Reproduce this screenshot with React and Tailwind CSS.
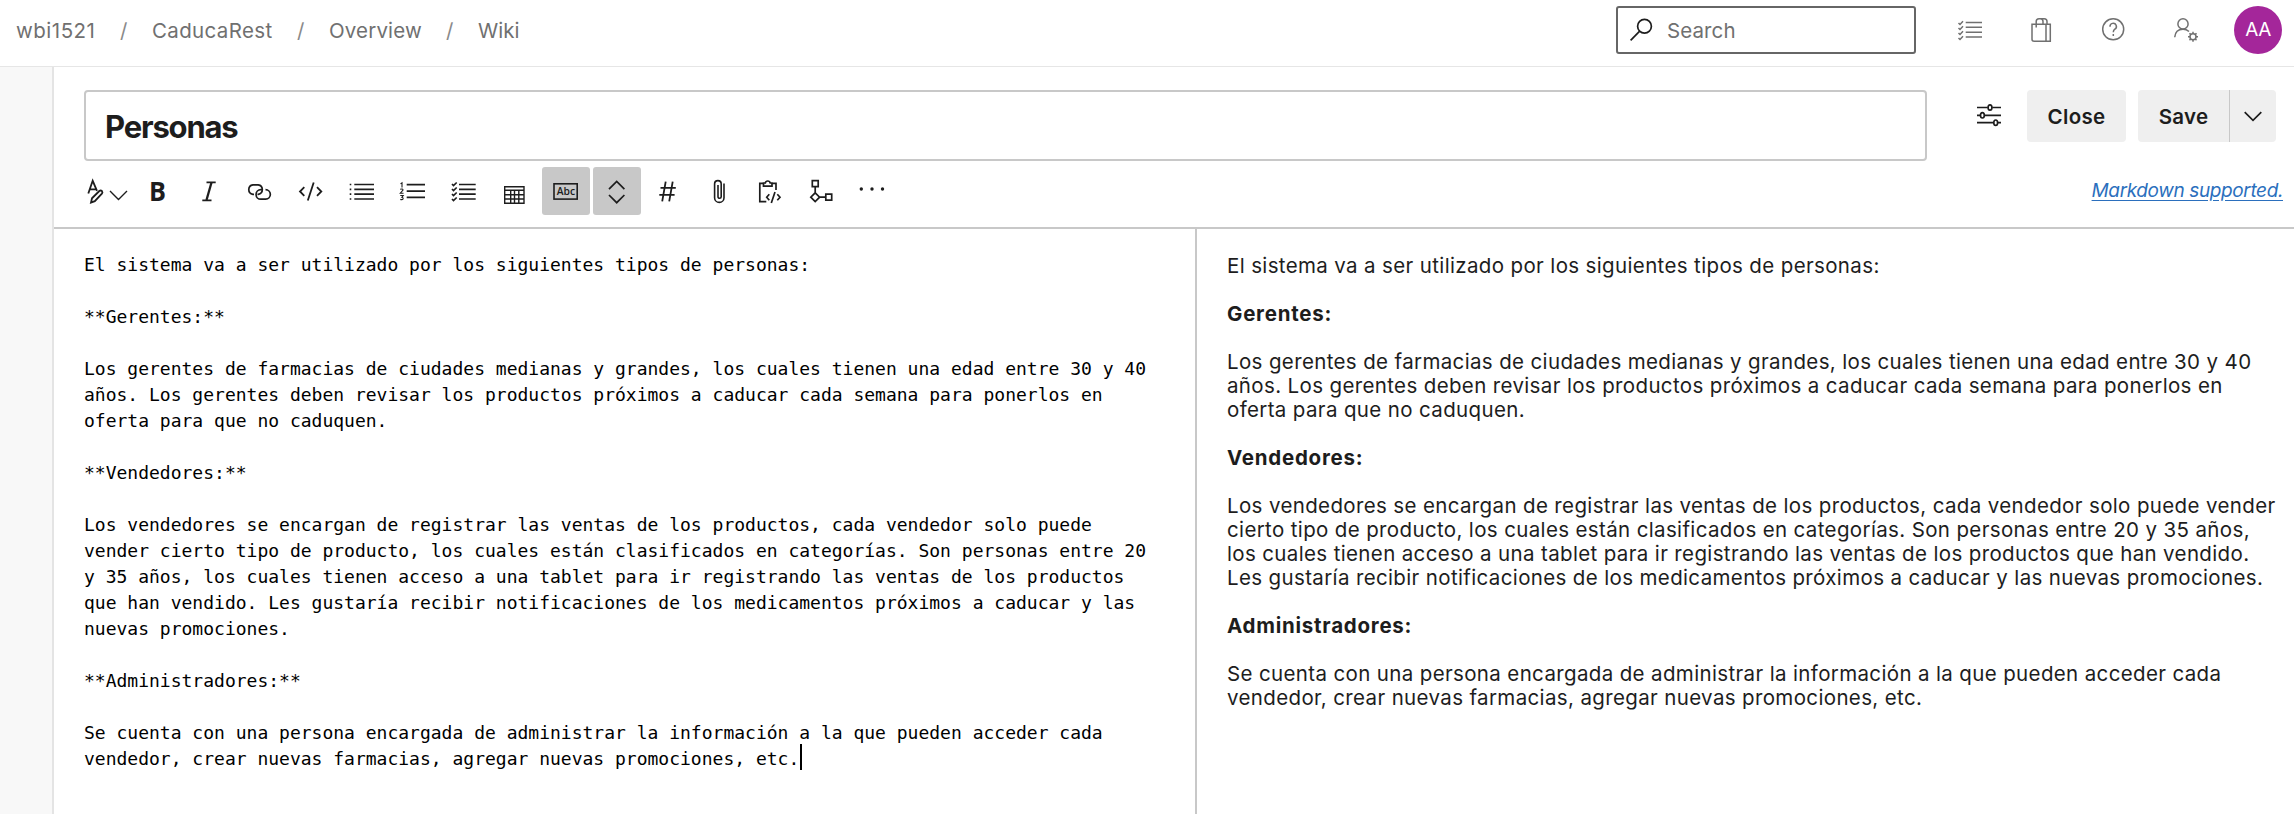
import React from "react";

const md = [
  "El sistema va a ser utilizado por los siguientes tipos de personas:",
  "",
  "**Gerentes:**",
  "",
  "Los gerentes de farmacias de ciudades medianas y grandes, los cuales tienen una edad entre 30 y 40",
  "años. Los gerentes deben revisar los productos próximos a caducar cada semana para ponerlos en",
  "oferta para que no caduquen.",
  "",
  "**Vendedores:**",
  "",
  "Los vendedores se encargan de registrar las ventas de los productos, cada vendedor solo puede",
  "vender cierto tipo de producto, los cuales están clasificados en categorías. Son personas entre 20",
  "y 35 años, los cuales tienen acceso a una tablet para ir registrando las ventas de los productos",
  "que han vendido. Les gustaría recibir notificaciones de los medicamentos próximos a caducar y las",
  "nuevas promociones.",
  "",
  "**Administradores:**",
  "",
  "Se cuenta con una persona encargada de administrar la información a la que pueden acceder cada",
  "vendedor, crear nuevas farmacias, agregar nuevas promociones, etc.",
];

const preview = [
  { lines: ["El sistema va a ser utilizado por los siguientes tipos de personas:"] },
  { bold: true, lines: ["Gerentes:"] },
  {
    lines: [
      "Los gerentes de farmacias de ciudades medianas y grandes, los cuales tienen una edad entre 30 y 40",
      "años. Los gerentes deben revisar los productos próximos a caducar cada semana para ponerlos en",
      "oferta para que no caduquen.",
    ],
  },
  { bold: true, lines: ["Vendedores:"] },
  {
    lines: [
      "Los vendedores se encargan de registrar las ventas de los productos, cada vendedor solo puede vender",
      "cierto tipo de producto, los cuales están clasificados en categorías. Son personas entre 20 y 35 años,",
      "los cuales tienen acceso a una tablet para ir registrando las ventas de los productos que han vendido.",
      "Les gustaría recibir notificaciones de los medicamentos próximos a caducar y las nuevas promociones.",
    ],
  },
  { bold: true, lines: ["Administradores:"] },
  {
    lines: [
      "Se cuenta con una persona encargada de administrar la información a la que pueden acceder cada",
      "vendedor, crear nuevas farmacias, agregar nuevas promociones, etc.",
    ],
  },
];

function Icon({ w = 28, h = 28, sw = 1.6, className = "", children }) {
  return (
    <svg
      className={"shrink-0 " + className}
      width={w}
      height={h}
      viewBox={`0 0 ${w} ${h}`}
      fill="none"
      stroke="currentColor"
      strokeWidth={sw}
    >
      {children}
    </svg>
  );
}

function Tool({ active, children }) {
  return (
    <div
      className={
        "flex h-12 w-12 shrink-0 items-center justify-center rounded-[3px] " +
        (active ? "bg-[#c8c8c8]" : "")
      }
    >
      {children}
    </div>
  );
}

function Toolbar() {
  return (
    <div className="flex h-[67px] w-full shrink-0 items-start pl-[30px] pt-[7px]">
      <div className="flex h-12 w-[50px] items-center">
        <Icon w={50} h={28} sw={1.8}>
          <path d="M4.300 16.500L8.700 3.800L13 13.800M5.800 12.300H12" />
          <path d="M7 25.600L8 21.300L15.300 14Q16.700 12.900 17.900 14Q19 15.400 17.900 16.700L10.800 24.200Z" />
          <path d="M26 14L34.500 22.500L43 14" strokeWidth="1.4" />
        </Icon>
      </div>
      <div className="flex gap-[3px]">
        <Tool>
          <svg className="shrink-0" width="28" height="44" viewBox="0 -8 28 44">
            <text x="5" y="24" fontSize="26.500" fontWeight="700" fontFamily="Open Sans, sans-serif" textLength="17" lengthAdjust="spacingAndGlyphs" fill="currentColor">B</text>
          </svg>
        </Tool>
        <Tool>
          <Icon sw={1.8}>
            <path d="M11.500 5.300H20.700M7.300 23.300H16.500" />
            <path d="M16.500 5.500L11.500 23" strokeWidth="2.300" />
          </Icon>
        </Tool>
        <Tool>
          <Icon sw={1.7}>
            <path d="M8 17.300H6.900A4.800 4.800 0 0 1 6.900 7.800H12.200A4.800 4.800 0 0 1 12.200 17.300H11.500" />
            <path d="M19.500 12.700A4.750 4.750 0 0 1 19.700 22.200H14.800A4.750 4.750 0 0 1 14.800 12.700H16" />
          </Icon>
        </Tool>
        <Tool>
          <Icon sw={1.8}>
            <path d="M7.300 10.200L3 14.500L7.300 18.800M20 10.200L24.300 14.500L20 18.800M16.700 5.500L10.800 23.500" />
          </Icon>
        </Tool>
        <Tool>
          <Icon sw={1.7}>
            <path d="M6.300 7.500H26M6.300 12.300H26M6.300 17.100H26M6.300 22H26" />
            <path d="M1.700 7.500H3.300M1.700 12.300H3.300M1.700 17.100H3.300M1.700 22H3.300" />
          </Icon>
        </Tool>
        <Tool>
          <Icon sw={1.8}>
            <path d="M7.700 7.700H26M7.700 14.200H26M7.700 20.400H26" />
            <path d="M1.500 6.900L3 5.900V10.500M1.200 12.300Q4 11.300 4 13L1.300 16.200H4.500M1.300 18.500H4.200L2.800 20.300Q4.400 20.500 4.100 22Q3.300 23 1.300 22.400" strokeWidth="1.100" />
          </Icon>
        </Tool>
        <Tool>
          <Icon sw={1.7}>
            <path d="M9 7.500H25.700M9 12.300H25.700M9 17.100H25.700M9 22H25.700" />
            <path d="M2 7L3.500 8.500L6.700 5.500M2 12L3.500 13.500L6.700 10.500M2 17L3.500 18.500L6.700 15.500M2 22L3.500 23.500L6.700 20.500" />
          </Icon>
        </Tool>
        <Tool>
          <Icon sw={1.400}>
            <path d="M3.700 9.700H23V26.200H3.700ZM3.700 13.200H23M3.700 17.700H23M3.700 22H23M9.700 13.200V26M13.500 13.200V26M17.800 13.200V26" />
          </Icon>
        </Tool>
        <Tool active>
          <svg className="shrink-0" width="28" height="28" viewBox="0 0 28 28">
            <rect x="2" y="6.800" width="23.200" height="15.300" fill="none" stroke="currentColor" strokeWidth="1.600" />
            <text x="4.700" y="18.300" textLength="18.300" lengthAdjust="spacingAndGlyphs" fontSize="11" fontWeight="600" fontFamily="Open Sans, sans-serif" fill="currentColor">Abc</text>
          </svg>
        </Tool>
        <Tool active>
          <Icon sw={1.7}>
            <path d="M6 12.200L13.700 4.500L21.400 12.200M6 18L13.700 25.700L21.400 18" />
          </Icon>
        </Tool>
        <Tool>
          <Icon sw={1.8}>
            <path d="M11.700 4.700L8.200 24.300M18.700 4.700L15.200 24.300M6.500 10.900H21.800M5.300 17.800H20.600" />
          </Icon>
        </Tool>
        <Tool>
          <Icon sw={1.600}>
            <path d="M19 6.500V20.700A4.700 4.700 0 0 1 9.600 20.700V6.900A3.300 3.300 0 0 1 16.200 6.900V19.700A1.600 1.600 0 0 1 13 19.700V8" />
          </Icon>
        </Tool>
        <Tool>
          <Icon sw={1.7}>
            <path d="M10.300 24.700H3.800V6.300H7.500M16 6.300H20V13M7.500 9.200V6H9.300A2.500 2.500 0 0 1 14.200 6H16V9.200Z" />
            <path d="M13.300 17.200L10.700 20.200L13.300 23.200M21.300 17.200L24 20.200L21.300 23.200M19 15L15.300 26" />
          </Icon>
        </Tool>
        <Tool>
          <Icon sw={1.7}>
            <path d="M5.300 3.700H11.200V9.600H5.300ZM8.200 9.600V15.800M8.200 15.800L12.600 20.200L8.200 24.600L3.800 20.200ZM12.600 20.200H18.800M18.800 17.200H24.700V23.200H18.800Z" />
          </Icon>
        </Tool>
        <Tool>
          <Icon sw={0}>
            <g fill="currentColor">
              <circle cx="3.300" cy="12" r="1.700" />
              <circle cx="14" cy="12" r="1.700" />
              <circle cx="24.500" cy="12" r="1.700" />
            </g>
          </Icon>
        </Tool>
      </div>
      <a className="ml-auto mr-[11px] mt-[11px] text-[19px] leading-[26px] tracking-[-0.02em] italic text-[#2b6fbd] underline underline-offset-[3px]">
        Markdown supported.
      </a>
    </div>
  );
}

export default function App() {
  return (
    <div className="flex h-[814px] w-[2294px] flex-col overflow-hidden bg-white font-[Inter,sans-serif] text-[#1d1d1d]">
      <header className="flex h-[67px] shrink-0 items-center border-b border-[#e6e6e6] pb-[6px] pl-[16px] pr-[12px] text-[20.5px] text-[#707070]">
        <nav className="flex items-center pt-[2px]">
          <span className="w-[79px] tracking-[0.5px]">wbi1521</span>
          <span className="mx-[25px] w-[7px] text-[#8a8a8a]">/</span>
          <span className="w-[120px] tracking-[0.35px]">CaducaRest</span>
          <span className="mx-[25px] w-[7px] text-[#8a8a8a]">/</span>
          <span className="w-[92px] tracking-[0.15px]">Overview</span>
          <span className="mx-[25px] w-[7px] text-[#8a8a8a]">/</span>
          <span>Wiki</span>
        </nav>
        <div className="ml-auto flex h-12 w-[300px] items-center rounded-[3px] border-2 border-[#666] pl-[12px]">
          <Icon w={26} h={28} sw={1.700} className="text-[#1d1d1d]">
            <circle cx="14.500" cy="10.300" r="6.900" />
            <path d="M9.700 15.200L0.600 24.400" />
          </Icon>
          <span className="ml-[11px] pt-[2px] tracking-[0.1px]">Search</span>
        </div>
        <div className="ml-[40px] flex items-center gap-[44px]">
          <Icon sw={1.500}>
            <path d="M9.700 6.400H26M9.700 11.300H26M9.700 16.200H26M9.700 21.100H26" />
            <path d="M2.500 7L4 8.500L7 5.300M2.500 12L4 13.500L7 10.300M2.500 17L4 18.500L7 15.300M2.500 22L4 23.500L7 20.300" />
          </Icon>
          <Icon sw={1.500}>
            <path d="M4 8.300H22.300V25.300H6.200Q4 25.300 4 23.300ZM18 8.300V25.300M8.200 11.500V5.500Q8.200 2.700 11 2.700H12.300Q15 2.700 15 5.500V8.300M12.300 2.700H16.200Q19 2.700 19 5.500V8.300" />
          </Icon>
          <Icon sw={1.500}>
            <circle cx="13.200" cy="13.300" r="10.500" />
            <path d="M10 10.700A3.200 3.200 0 1 1 14.900 13.200Q13.300 14.300 13.300 16.300M13.300 18V20" />
          </Icon>
          <Icon sw={1.500}>
            <circle cx="11" cy="7.900" r="5.100" />
            <path d="M2.700 21.300Q3.300 13.200 11 13.200Q14.500 13.200 17 15.500" />
            <circle cx="21" cy="20.700" r="3" />
            <path d="M21 15.700V17.700M21 23.700V25.700M16 20.700H18M24 20.700H26M17.500 17.200L18.900 18.600M23.100 22.800L24.500 24.200M24.500 17.200L23.100 18.600M18.900 22.800L17.500 24.200" />
          </Icon>
        </div>
        <div className="ml-[34px] flex h-12 w-12 items-center justify-center rounded-full bg-[#a4269a] pt-px text-[19px] tracking-[-0.4px] text-white">AA</div>
      </header>
      <div className="flex min-h-0 flex-1">
        <aside className="w-[54px] shrink-0 border-r-2 border-[#e4e4e4] bg-[#f8f8f8]" />
        <main className="flex min-w-0 flex-1 flex-col">
          <div className="flex h-[93px] shrink-0 items-start pl-[30px] pr-[18px] pt-[23px]">
            <div className="flex h-[71px] w-[1843px] shrink-0 items-center rounded-[4px] border-2 border-[#c8c8c8] pl-[19px] pt-[3px] text-[31px] font-bold tracking-[-0.038em]">
              Personas
            </div>
            <Icon sw={1.700} className="ml-[48px] mt-[11px]">
              <path d="M2 6.500H12.800M17.200 6.500H26M2 14.300H5.300M9.700 14.300H26M2 21.700H18.500M22.900 21.700H26" />
              <ellipse cx="15" cy="6.500" rx="1.900" ry="2.700" />
              <ellipse cx="7.400" cy="14.300" rx="1.900" ry="2.700" />
              <ellipse cx="20.700" cy="21.700" rx="1.900" ry="2.700" />
            </Icon>
            <button className="ml-auto flex h-[52px] w-[99px] items-center justify-center rounded-[4px] bg-[#efefef] pt-[2px] text-[20.5px] font-semibold tracking-[0.3px]">Close</button>
            <div className="ml-[12px] flex h-[52px] w-[138px] overflow-hidden rounded-[4px] bg-[#efefef]">
              <button className="flex w-[92px] items-center justify-center border-r border-[#c8c8c8] pt-[2px] text-[20.5px] font-semibold tracking-[0.3px]">Save</button>
              <div className="flex flex-1 items-center justify-center">
                <Icon w={20} h={20} sw={1.700}>
                  <path d="M1.700 6.200L10 14.300L18.300 6.200" />
                </Icon>
              </div>
            </div>
          </div>
          <Toolbar />
          <div className="flex min-h-0 flex-1 border-t-2 border-[#c8c8c8]">
            <section className="w-[1143px] shrink-0 border-r-2 border-[#c8c8c8] pl-[30px] pt-[23px] font-['DejaVu_Sans_Mono',monospace] text-[18px] leading-[26px] text-black">
              {md.map((line, i) => (
                <div key={i} className="flex h-[26px] whitespace-pre">
                  {line}
                  {i === md.length - 1 && <span className="-mt-[2px] ml-px h-[26px] w-[2px] bg-black" />}
                </div>
              ))}
            </section>
            <section className="flex flex-1 flex-col gap-[24px] pl-[30px] pt-[25px] text-[20.5px] leading-[24px]">
              {preview.map((p, i) => (
                <div key={i} className={p.bold ? "font-bold tracking-[0.75px]" : "tracking-[0.36px]"}>
                  {p.lines.map((line) => (
                    <div key={line} className="whitespace-pre">{line}</div>
                  ))}
                </div>
              ))}
            </section>
          </div>
        </main>
      </div>
    </div>
  );
}
